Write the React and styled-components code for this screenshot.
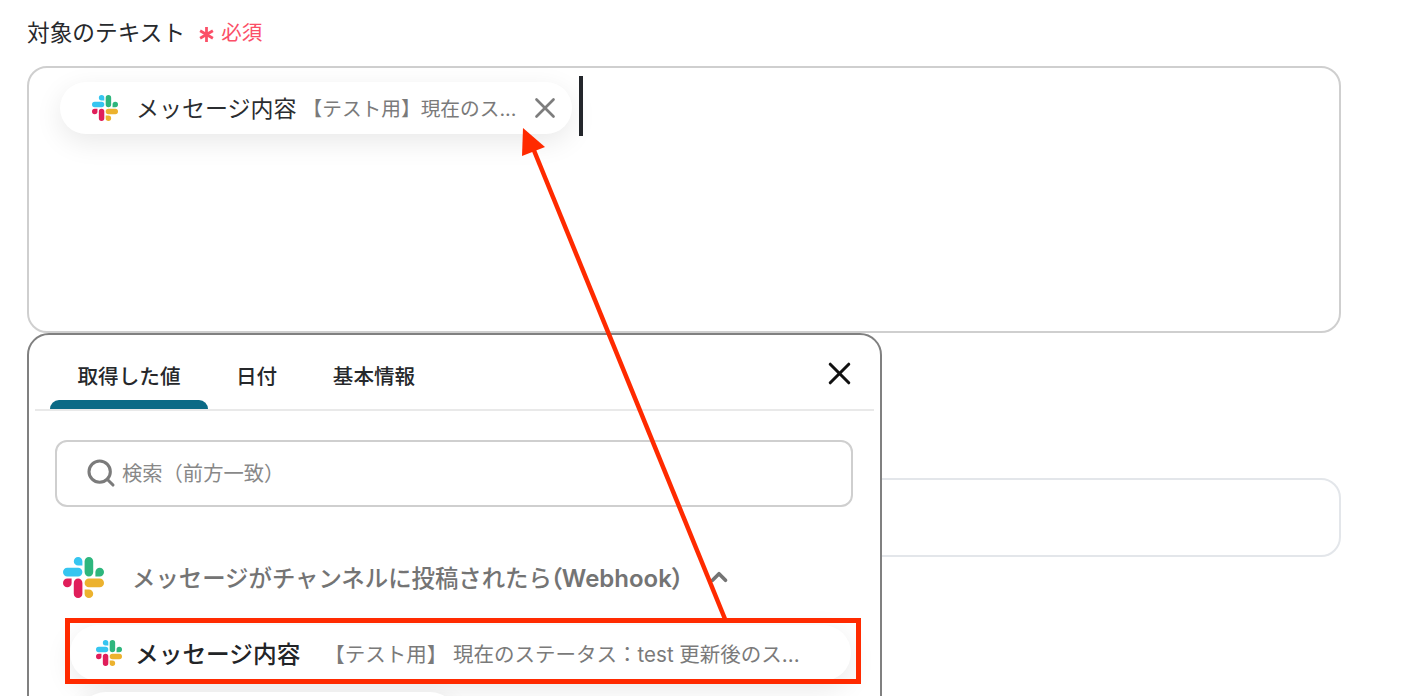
import React from "react";
import styled, { createGlobalStyle } from "styled-components";
import { Search, X, ChevronUp } from "lucide-react";

const Global = createGlobalStyle`
  html, body { margin: 0; padding: 0; background: #fff; }
  body { font-family: Inter, "Noto Sans CJK JP", "Noto Sans", sans-serif; }
`;

const Page = styled.div`
  position: relative;
  width: 1410px;
  height: 696px;
  overflow: hidden;
  box-sizing: border-box;
  padding: 18px 69px 0 27px;
  background: #fff;
`;
const LabelRow = styled.div`
  display: flex;
  align-items: center;
  height: 30px;
  margin-bottom: 18px;
`;
const Label = styled.span`
  font-size: 22.7px;
  font-weight: 400;
  color: #27292c;
  line-height: 30px;
`;
const Required = styled.span`
  display: inline-flex;
  align-items: center;
  margin-left: 13px;
  font-size: 20.5px;
  color: #fb4f67;
  line-height: 30px;
  gap: 6px;
`;
const Star = styled.svg`
  width: 17px;
  height: 17px;
  margin-top: 2px;
`;
const TextField = styled.div`
  box-sizing: border-box;
  height: 267px;
  border: 2px solid #cfcfcf;
  border-radius: 20px;
  padding: 14px 0 0 31px;
  display: flex;
  align-items: flex-start;
  background: #fff;
`;
const Chip = styled.div`
  display: flex;
  align-items: center;
  box-sizing: border-box;
  width: 512px;
  height: 52px;
  padding-left: 32px;
  border-radius: 26px;
  background: #fff;
  box-shadow: 0 8px 28px rgba(0, 0, 0, 0.09);
  flex: none;
`;
const ChipTitle = styled.span`
  margin: -2px 0 0 18px;
  font-size: 23px;
  color: #2b2d30;
  white-space: nowrap;
`;
const ChipValue = styled.span`
  margin: -2px 0 0 6px;
  width: 216px;
  font-size: 19.7px;
  color: #7a7a7a;
  white-space: nowrap;
`;
const ChipClose = styled(X)`
  margin-left: 9px;
  width: 34px;
  height: 34px;
  color: #7d7d7d;
  flex: none;
`;
const Caret = styled.div`
  width: 4px;
  height: 60px;
  margin: -6px 0 0 7px;
  background: #23262b;
  flex: none;
`;
const SecondField = styled.div`
  box-sizing: border-box;
  height: 79px;
  margin-top: 145px;
  border: 2px solid #e3e6ea;
  border-radius: 20px;
  background: #fff;
`;
const Popup = styled.div`
  position: absolute;
  left: 27px;
  top: 333px;
  box-sizing: border-box;
  width: 855px;
  height: 420px;
  padding: 0 6px;
  border: 2px solid #808080;
  border-radius: 22px;
  background: #fff;
`;
const TabBar = styled.div`
  display: flex;
  align-items: flex-end;
  height: 74px;
  padding-left: 15px;
  border-bottom: 2px solid #e9e9e9;
  position: relative;
`;
const Tab = styled.div`
  position: relative;
  box-sizing: border-box;
  width: ${(p) => p.$w}px;
  height: 74px;
  margin-right: ${(p) => p.$mr}px;
  padding-top: 27px;
  text-align: center;
  font-size: 20.6px;
  line-height: 30px;
  font-weight: 500;
  color: #26282b;
  white-space: nowrap;
  &::after {
    content: "";
    display: ${(p) => (p.$active ? "block" : "none")};
    position: absolute;
    left: 0;
    right: 0;
    bottom: 0;
    height: 9px;
    background: #0b6a86;
    border-radius: 9px 9px 0 0;
  }
`;
const PopupClose = styled(X)`
  position: absolute;
  right: 16px;
  top: 20px;
  width: 37px;
  height: 37px;
  color: #111;
  stroke-width: 2;
`;
const SearchBox = styled.div`
  display: flex;
  align-items: center;
  box-sizing: border-box;
  width: 798px;
  height: 67px;
  margin: 29px 0 0 20px;
  padding: 0 0 4px 28px;
  border: 2px solid #cfcfcf;
  border-radius: 12px;
`;
const SearchIcon = styled(Search)`
  width: 32px;
  height: 32px;
  margin-top: 2px;
  color: #7b7b7b;
  stroke-width: 2.3;
  flex: none;
`;
const Placeholder = styled.span`
  margin-left: 5px;
  font-size: 20.3px;
  color: #888;
`;
const GroupRow = styled.div`
  display: flex;
  align-items: center;
  height: 42px;
  margin: 49px 0 0 28px;
`;
const GroupTitle = styled.span`
  margin: -2px 0 0 28px;
  font-size: 23.4px;
  font-weight: 500;
  color: #747474;
  white-space: nowrap;
`;
const GroupTail = styled.span`
  font-feature-settings: "palt";
  font-weight: 600;
  font-size: 24px;
  margin-left: -2px;
`;
const Chevron = styled(ChevronUp)`
  margin-left: 22px;
  width: 26px;
  height: 26px;
  color: #747474;
  stroke-width: 3.4;
  flex: none;
`;
const ValueRow = styled.div`
  display: flex;
  align-items: center;
  box-sizing: border-box;
  width: 781px;
  height: 56px;
  margin: 27px 0 0 35px;
  padding-left: 26px;
  border-radius: 28px;
  background: #fff;
  box-shadow: 0 8px 28px rgba(0, 0, 0, 0.09);
`;
const ValueTitle = styled.span`
  margin-left: 13px;
  font-size: 23.7px;
  font-weight: 500;
  color: #222427;
  white-space: nowrap;
`;
const ValueText = styled.span`
  margin-left: 24px;
  font-size: 20.5px;
  color: #7a7a7a;
  white-space: nowrap;
`;
const NextRow = styled.div`
  width: 380px;
  height: 56px;
  margin: 11px 0 0 43px;
  border-radius: 28px;
  background: #fff;
  box-shadow: 0 4px 20px rgba(0, 0, 0, 0.08);
`;
const Highlight = styled.div`
  position: absolute;
  left: 65px;
  top: 618px;
  box-sizing: border-box;
  width: 796px;
  height: 66px;
  border: 5px solid #ff2a00;
  pointer-events: none;
`;
const ArrowLayer = styled.svg`
  position: absolute;
  left: 0;
  top: 0;
  width: 1410px;
  height: 696px;
  pointer-events: none;
`;

const SlackLogo = ({ size }) => (
  <svg width={size} height={size} viewBox="0 0 24 24" style={{ flex: "none" }}>
    <path fill="#E01E5A" d="M5.042 15.165a2.528 2.528 0 0 1-2.52 2.523A2.528 2.528 0 0 1 0 15.165a2.527 2.527 0 0 1 2.522-2.52h2.52v2.52zM6.313 15.165a2.527 2.527 0 0 1 2.521-2.52 2.527 2.527 0 0 1 2.521 2.52v6.313A2.528 2.528 0 0 1 8.834 24a2.528 2.528 0 0 1-2.521-2.522v-6.313z" />
    <path fill="#36C5F0" d="M8.834 5.042a2.528 2.528 0 0 1-2.521-2.52A2.528 2.528 0 0 1 8.834 0a2.528 2.528 0 0 1 2.521 2.522v2.52H8.834zM8.834 6.313a2.528 2.528 0 0 1 2.521 2.521 2.528 2.528 0 0 1-2.521 2.521H2.522A2.528 2.528 0 0 1 0 8.834a2.528 2.528 0 0 1 2.522-2.521h6.312z" />
    <path fill="#2EB67D" d="M18.956 8.834a2.528 2.528 0 0 1 2.522-2.521A2.528 2.528 0 0 1 24 8.834a2.528 2.528 0 0 1-2.522 2.521h-2.522V8.834zM17.688 8.834a2.528 2.528 0 0 1-2.523 2.521 2.527 2.527 0 0 1-2.52-2.521V2.522A2.527 2.527 0 0 1 15.165 0a2.528 2.528 0 0 1 2.523 2.522v6.312z" />
    <path fill="#ECB22E" d="M15.165 18.956a2.528 2.528 0 0 1 2.523 2.522A2.528 2.528 0 0 1 15.165 24a2.527 2.527 0 0 1-2.52-2.522v-2.522h2.52zM15.165 17.688a2.527 2.527 0 0 1-2.52-2.523 2.526 2.526 0 0 1 2.52-2.52h6.313A2.527 2.527 0 0 1 24 15.165a2.528 2.528 0 0 1-2.522 2.523h-6.313z" />
  </svg>
);

export default function App() {
  return (
    <>
      <Global />
      <Page>
        <LabelRow>
          <Label>対象のテキスト</Label>
          <Required>
            <Star viewBox="0 0 16 16">
              <path d="M8 1v14M2 4.5l12 7M14 4.5l-12 7" stroke="#fb4f67" strokeWidth="2.6" fill="none" />
            </Star>
            必須
          </Required>
        </LabelRow>
        <TextField>
          <Chip>
            <SlackLogo size={26} />
            <ChipTitle>メッセージ内容</ChipTitle>
            <ChipValue>【テスト用】現在のス...</ChipValue>
            <ChipClose strokeWidth={1.9} />
          </Chip>
          <Caret />
        </TextField>
        <SecondField />
        <Popup>
          <TabBar>
            <Tab $w={158} $mr={28} $active>取得した値</Tab>
            <Tab $w={40} $mr={56}>日付</Tab>
            <Tab $w={84} $mr={0}>基本情報</Tab>
            <PopupClose />
          </TabBar>
          <SearchBox>
            <SearchIcon />
            <Placeholder>検索（前方一致）</Placeholder>
          </SearchBox>
          <GroupRow>
            <SlackLogo size={41} />
            <GroupTitle>メッセージがチャンネルに投稿されたら<GroupTail>（Webhook）</GroupTail></GroupTitle>
            <Chevron />
          </GroupRow>
          <ValueRow>
            <SlackLogo size={26} />
            <ValueTitle>メッセージ内容</ValueTitle>
            <ValueText>【テスト用】 現在のステータス：test 更新後のス...</ValueText>
          </ValueRow>
          <NextRow />
        </Popup>
        <Highlight />
        <ArrowLayer viewBox="0 0 1410 696">
          <line x1="725" y1="619" x2="533" y2="148" stroke="#ff2a00" strokeWidth="4.5" />
          <polygon points="523,128 545,147 522,156" fill="#ff2a00" />
        </ArrowLayer>
      </Page>
    </>
  );
}
